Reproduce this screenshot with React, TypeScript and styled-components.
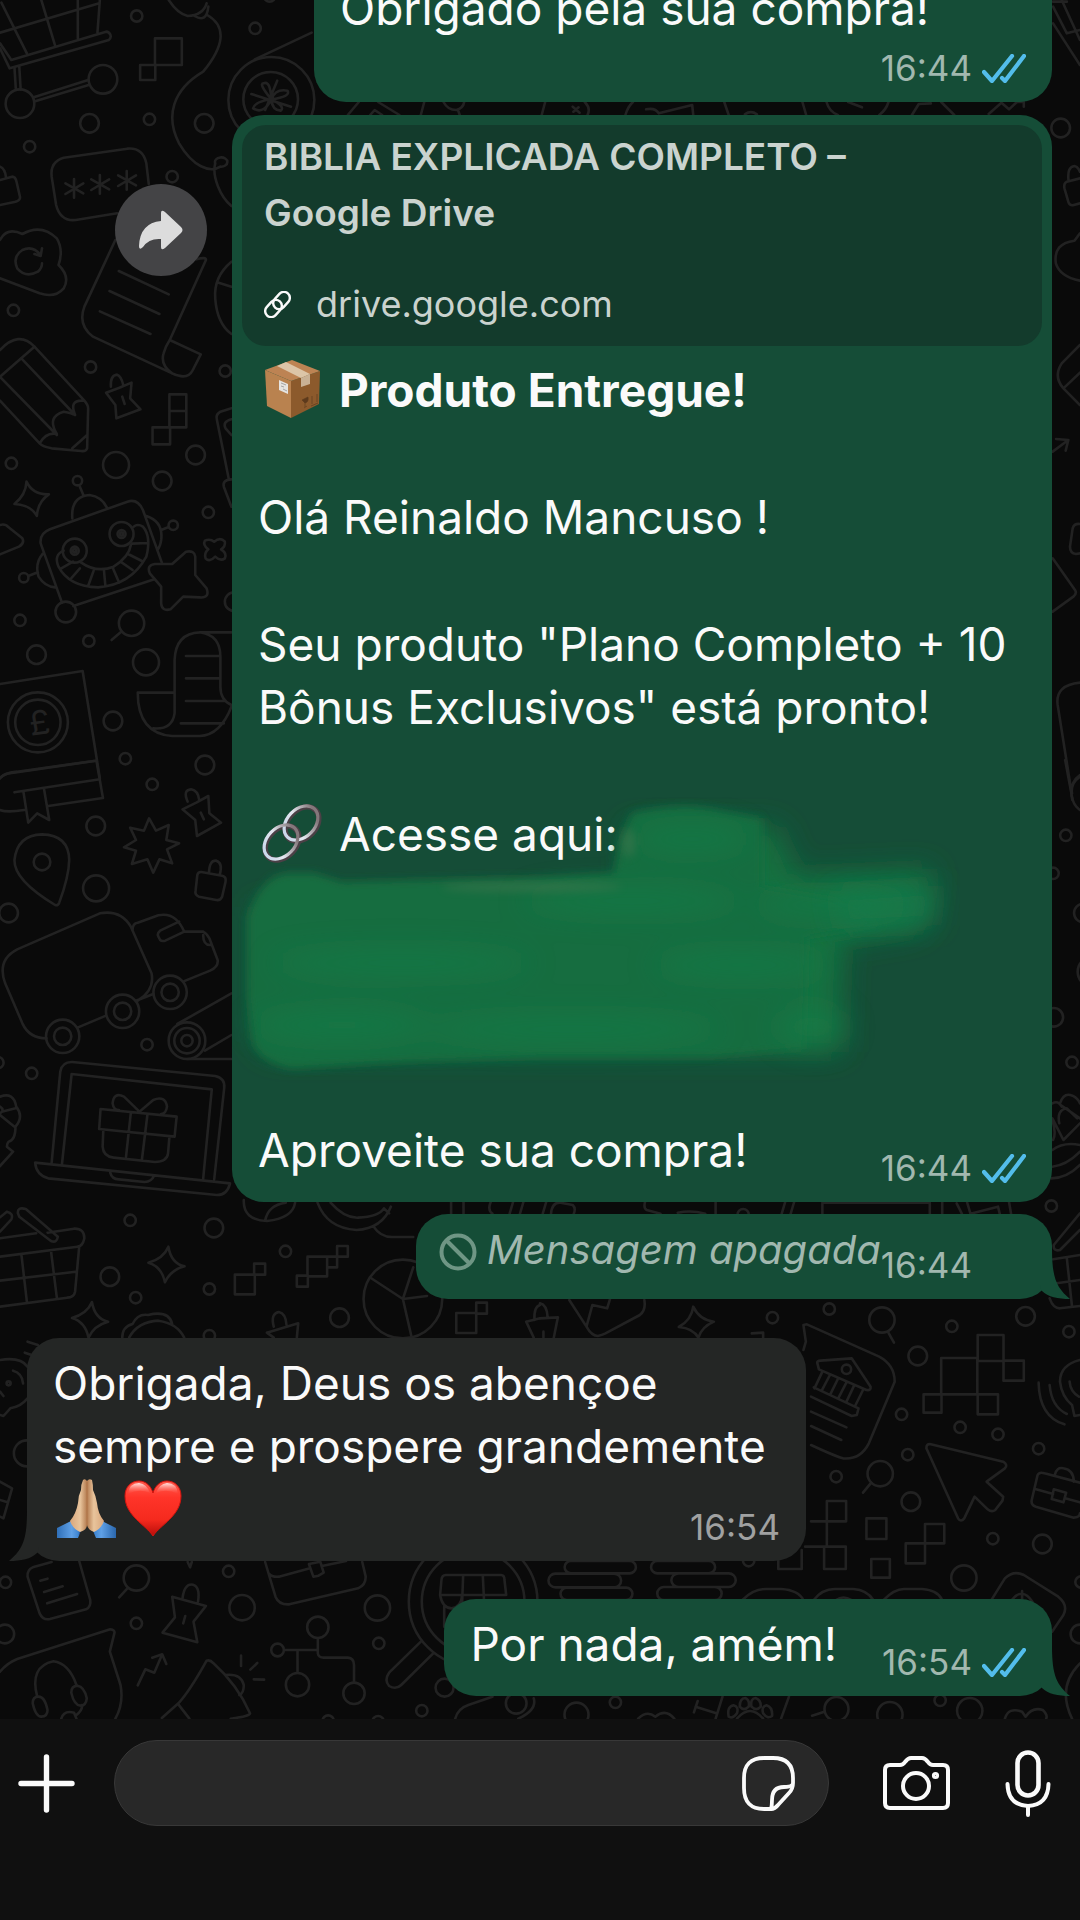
import React from 'react'
import styled, { createGlobalStyle } from 'styled-components'

const colors = {
  wall: '#0a0a0a',
  doodle: '#222222',
  sent: '#154d37',
  preview: '#133b2c',
  received: '#242625',
  text: '#fafafa',
  previewText: '#cad3cf',
  sentMeta: '#a1b8af',
  receivedMeta: '#a0a1a1',
  tick: '#53bdeb',
  bar: '#101010',
  field: '#282828',
  fieldBorder: '#383838',
}

type Circle = [number, number, number]

/* The wallpaper drawings sit on patches, each with its own origin */
const xUnit = 2.904
const yUnit = 3

type PatchProps = {
  x: number
  y: number
  unit?: number
  d: string[]
  circles?: Circle[]
  children?: React.ReactNode
}

function Patch({ x, y, unit = xUnit, d, circles = [], children }: PatchProps) {
  return (
    <g transform={`translate(${x} ${y}) scale(${1 / unit} ${1 / yUnit})`}>
      {d.map((path) => (
        <path key={path} d={path} />
      ))}
      {circles.map(([cx, cy, r]) => (
        <ellipse key={`${cx}-${cy}-${r}`} cx={cx} cy={cy} rx={(r * unit) / yUnit} ry={r} />
      ))}
      {children}
    </g>
  )
}

function Doodles() {
  return (
    <Wallpaper viewBox="0 0 1080 1719" preserveAspectRatio="xMidYMin slice" aria-hidden="true">
      <Patch
        x={0}
        y={0}
        d={[
          'M0 130L33 180L308 95A14 14 0 0 1 316 120L28 205L0 145M4 8L78 160M120 0L160 137M226 0V115M290 0L283 98M0 98L288 10',
          'M42 203L46 268M56 200L60 268M98 292L256 240M102 304L260 254',
          'M450 115H528V195H450ZM407 195H451V240H407Z',
          'M490 0Q515 40 545 48Q590 45 600 10M565 48Q600 70 605 20M602 45C660 80 650 140 590 215C500 270 480 350 520 430C560 500 610 520 640 500A18 14 0 1 0 625 490C615 530 640 590 672 618',
          'M740 178L905 98',
          'M788 298Q750 250 765 250Q785 240 788 298M788 298Q800 265 835 272Q845 290 788 298M788 298Q740 305 735 325Q765 345 788 298M788 298Q790 330 815 332Q830 320 788 298M730 282L845 320M805 242L770 330',
          'M432 552L425 490Q415 442 370 446L185 473Q145 485 150 530L163 615Q175 665 220 660L340 640',
          'M215 537V593M190 550L242 580M190 582L242 550M290 525V581M265 538L317 568M265 570L317 538M368 513V569M343 526L395 556M343 558L395 526',
          'M0 500Q15 505 18 535M0 540L35 530Q45 530 48 545L58 590Q60 600 45 605L0 615',
          'M0 720Q20 680 65 702Q120 670 165 715Q185 750 170 795Q205 830 185 865Q160 895 115 880L0 835M122 745L118 768L100 762M118 765Q95 735 65 750Q35 770 50 805Q75 835 110 815Q122 805 122 790',
          'M335 720L245 920Q225 975 270 1010L500 1120Q545 1142 560 1110L583 1063L493 1020M500 1120Q465 1095 475 1060Q480 1040 493 1020L598 780Q600 770 570 778M345 813L490 883M318 873L463 942M290 934L437 1002',
          'M672 785Q620 830 625 895Q630 970 672 1002M635 848L672 860',
          'M0 1050Q55 990 100 1040L0 1130',
          'M1010 345L1042 306M1098 306L1160 345M1075 345L1088 330L1110 345M1232 306L1222 345M1288 306Q1300 330 1325 330Q1345 325 1348 306M1330 330L1335 345',
        ]}
        circles={[
          [58, 311, 43], [299, 238, 43], [397, 48, 17], [741, 85, 17], [260, 370, 28], [434, 358, 17],
          [86, 440, 17], [593, 370, 28], [500, 530, 17], [39, 931, 17], [263, 1101, 17], [654, 1113, 17],
          [783, -12, 17], [788, 300, 129], [786, 298, 82],
        ]}
      />
      <Patch
        x={540}
        y={0}
        d={[
          'M1490 70L1568 195M1490 20L1530 100L1568 90M1515 0L1568 120M1490 5H1530',
          'M15 306L5 345M95 320L115 338M97 335L112 322M130 306Q148 325 138 345M248 345Q255 320 270 306M308 328Q335 322 345 340L442 315L445 345M535 306L548 345M595 343Q612 330 630 343M762 306L773 345M832 306Q840 335 865 345M1012 306Q1005 330 985 345M895 306L935 322M1080 345L1100 312L1135 310M1165 306L1203 345M1303 342L1340 308L1362 328L1385 306L1405 306V320',
          'M1568 535L1530 545Q1520 550 1523 565L1535 608Q1540 618 1550 615L1568 610M1535 543Q1530 500 1552 498Q1562 500 1568 515',
          'M1568 700L1552 722Q1490 730 1498 790Q1510 830 1568 842',
          'M1568 1035L1515 1090Q1490 1130 1520 1165L1568 1215M1520 1165L1568 1118',
        ]}
        circles={[[1512, 384, 28]]}
      />
      <Patch
        x={0}
        y={380}
        d={[
          'M100 -100L245 62Q256 75 256 85L253 205Q250 215 235 213L150 205Q125 200 115 190L0 62M62 -65L218 105M-10 -20L165 165M115 190Q135 155 165 162Q135 110 185 95Q210 100 218 105Q200 60 240 62M253 165L210 205',
          'M322 20Q320 -14 340 -16Q352 -12 358 15M308 38L345 24L382 8L378 55L408 88L338 115L335 75ZM355 50L362 72',
          'M492 43H541V142H492ZM492 93H541M443 142H494V193H443Z',
          'M352 755L324 780',
          'M77 305Q95 345 142 343Q110 365 107 408Q90 375 42 372Q75 345 77 305Z',
          'M180 668L118 490Q115 460 145 448L370 365Q400 355 415 390L470 548M213 678L448 598M210 415Q205 350 260 345Q295 350 310 382M232 320L242 345M425 408Q475 425 468 480Q465 500 458 508M468 450L490 441M125 520Q100 550 112 590Q130 620 160 622M82 588L110 577',
          'M185 512Q155 525 170 560Q200 620 285 622Q380 615 425 530Q440 470 415 440Q400 430 388 440M235 547Q280 580 330 560Q375 530 380 495M205 597L232 565M257 615L272 572M306 618L302 572M346 608L328 565M385 570L350 545M412 543L372 522M430 489L383 491M178 565L212 545',
          'M500 552L540 515Q565 510 567 530V585L600 625Q610 655 580 652L532 650L495 688Q470 695 468 670V620L435 580Q425 555 450 552Z',
          'M622 485Q640 470 653 485Q655 500 642 508Q660 520 653 535Q640 545 625 530Q608 548 597 535Q592 520 605 508Q588 495 595 482Q610 475 622 485Z',
          'M0 435Q15 430 25 442L65 475Q72 490 55 500L0 523',
          'M672 85L640 95Q625 105 630 120L665 300M672 118Q645 125 655 145L672 165M672 298Q645 300 650 320L672 380',
          'M672 757H580Q510 760 507 840V1000Q500 1050 445 1045M507 938H400Q400 1060 500 1068H580Q640 1065 672 980M580 757Q640 765 640 830V920Q640 960 672 975M540 828H635M540 895H635M540 963H655M525 1030H650',
          'M0 912L240 873L290 1195M277 1142L50 1175Q0 1180 -10 1210',
        ]}
        circles={[
          [33, 250, 17], [337, 255, 39], [568, 225, 28], [471, 303, 28], [605, 397, 17], [58, 721, 17],
          [382, 730, 38], [258, 783, 17], [106, 824, 28], [424, 847, 39], [328, 1023, 28], [364, 1136, 17],
          [595, 1155, 28], [191, 696, 31], [225, 302, 14], [503, 436, 14], [69, 593, 14], [680, 665, 28],
          [353, 462, 36], [217, 512, 36], [353, 462, 12], [353, 462, 5], [217, 512, 12], [217, 512, 5],
          [110, 1027, 90], [110, 1027, 68],
        ]}
      >
        <Pound x={84} y={1064} transform="rotate(-8 110 1027)">
          £
        </Pound>
      </Patch>
      <Patch
        x={1000}
        y={380}
        unit={3}
        d={[
          'M158 215L205 180M168 177L205 180L197 212M240 432Q222 430 218 445L210 500Q210 520 228 522L240 520M158 535L225 630Q232 640 220 650L158 695M240 908Q165 915 173 975L215 1240M240 1185Q205 1210 217 1260',
        ]}
      />
      <Patch
        x={0}
        y={760}
        d={[
          'M0 55Q10 40 40 38L280 2L299 114L140 138M0 150Q20 158 70 150M42 97L290 58M68 95L82 188L108 160L143 180L128 88',
          'M433 175L453 212L490 195L483 240L520 250L485 268L500 310L463 298L445 338L428 298L383 312L395 272L360 262L395 240L378 203L418 212Z',
          'M545 125Q530 90 555 88Q575 92 578 118M530 148L570 128L605 108L608 160L642 188L572 228L567 180ZM583 158L592 178',
          'M160 435Q40 360 42 300Q50 225 122 223Q200 225 201 300Q200 350 172 428Q168 438 160 435Z',
          'M585 336L645 347Q658 350 655 365L645 410Q640 422 628 420L578 410Q565 405 568 392L573 345Q575 335 585 336M607 338Q608 300 628 302Q648 308 638 345',
          'M135 835Q85 835 65 790L15 670Q-10 600 50 568L290 460Q350 448 380 500L440 640Q450 690 400 722M225 803L308 767M385 510Q385 490 400 488L460 466Q510 455 535 515H590Q600 520 608 535L632 600Q635 620 610 632L533 664M395 722L445 702M520 485L465 512Q455 520 460 530L465 540Q470 545 480 542L535 515M590 525Q590 555 610 555',
          'M515 792L672 700M595 872L672 825M543 897H672',
          'M0 1010Q40 995 47 1040Q70 1070 45 1100Q45 1140 25 1145Q20 1150 20 1160L38 1175L0 1218M0 1040Q15 1050 0 1060M0 1065L42 1100M5 1055L45 1045',
          'M150 1208L175 935Q180 905 210 906L625 948Q655 955 651 985L622 1258M180 1212L208 942L615 988L590 1256M102 1208L668 1270Q660 1305 630 1305L140 1255Q105 1245 102 1208ZM320 1238Q325 1258 345 1258L420 1266Q440 1265 447 1248',
          'M292 1047L513 1070L507 1130L288 1107ZM300 1110L298 1160Q300 1190 330 1193L450 1206Q485 1205 488 1180L492 1130M380 1058L366 1190M428 1065L412 1200M405 1055L360 1010Q330 995 327 1030Q330 1050 345 1050M405 1055L445 1020Q480 1005 485 1040Q482 1062 468 1062',
        ]}
        circles={[
          [442, 73, 17], [278, 198, 28], [279, 385, 39], [25, 459, 28], [122, 306, 25], [427, 854, 17],
          [92, 940, 17], [-6, 908, 17], [182, 829, 50], [182, 829, 26], [356, 754, 50], [356, 754, 26],
          [494, 697, 50], [494, 697, 26], [543, 842, 55], [543, 842, 38], [543, 842, 17],
        ]}
      />
      <Patch
        x={540}
        y={760}
        d={[
          'M1525 0L1545 110Q1548 135 1568 150M1568 50Q1540 70 1545 100',
          'M1488 1030Q1505 1020 1515 1040M1510 1030Q1520 1000 1540 1005Q1560 1010 1568 1030M1508 1090Q1500 1050 1530 1045L1560 1075M1488 1075L1520 1140L1568 1090M1512 1035L1568 1075M1488 1080Q1500 1120 1490 1140M1488 1170Q1520 1145 1568 1155M1488 1220Q1530 1215 1568 1175M1485 1255Q1530 1255 1568 1215',
        ]}
        circles={[
          [1527, 226, 17], [1490, 340, 17], [1578, 459, 28], [1605, 635, 45], [1492, 772, 28], [1545, 907, 17],
        ]}
      />
      <Patch
        x={0}
        y={1180}
        d={[
          'M708 60Q705 120 775 123Q850 115 857 68M770 122Q778 75 830 68M922 68Q950 145 1035 150Q1110 145 1135 80M960 68Q1000 115 1040 113Q1100 110 1115 85L1130 100M1085 140Q1105 172 1140 171H1200M1310 66V101M1346 66V101M1425 66Q1415 90 1430 101M1490 66L1480 101M1520 66L1510 101',
          'M0 175L105 160M138 158L215 146Q245 145 245 175Q240 200 225 200L0 230M230 200L218 335Q215 352 195 353L0 380M62 222L78 365M148 212L165 353M0 302L220 275M0 155L33 118Q40 100 20 95L0 112M56 110L148 183Q165 190 168 170L75 87Q50 80 52 100Z',
          'M489 200Q497 250 536 259Q495 270 479 307Q470 260 431 248Q475 235 489 200Z',
          'M267 366Q275 416 314 425Q273 436 257 473Q248 426 209 414Q253 401 267 366Z',
          'M682 284H740V343H682ZM738 251H770V284H738ZM893 230H950V289H893ZM862 287H894V320H862ZM950 230H979V262H950ZM979 198H1010V230H979ZM1325 399H1383V459H1325ZM1383 368H1414V401H1383Z',
          'M1170 357L1077 294M1170 357L1200 262M1170 357L1240 348M1170 357L1195 470',
          'M355 473Q355 440 385 432Q400 400 430 405Q490 390 500 432M375 473Q400 425 460 422Q515 430 535 473',
          'M795 440Q785 400 810 396Q830 400 832 435M775 458L866 430L862 473M775 458L795 473',
          'M1528 425L1568 415M1528 425L1550 473M1568 375Q1550 380 1552 420',
          'M0 540Q60 530 80 560M80 655Q60 680 30 685L10 708L0 705M38 572Q65 580 67 610M80 485L110 495M72 518L92 525M0 635L10 648',
          'M0 905L35 925L10 1015L0 1010M0 960L22 967',
        ]}
        circles={[
          [378, 121, 17], [621, 144, 28], [319, 290, 28], [394, 353, 17], [829, 214, 17], [608, 327, 17],
          [986, 413, 28], [608, 467, 17], [1170, 357, 118], [78, 820, 39], [25, 610, 6], [25, 610, 2],
        ]}
      />
      <Patch
        x={540}
        y={1180}
        d={[
          'M18 66L8 101M32 101Q35 66 60 68L95 75Q105 85 98 101M305 66Q300 85 310 90L350 101M400 98Q440 90 480 101M510 66V101M712 66L702 101M738 66L728 101M820 101V68H1132V101M1168 66V101M1210 70L1225 101M1240 66L1250 101L1330 80L1335 101M1362 66L1368 101',
          'M1010 455L1028 488M962 908L938 938',
          'M1568 100L1492 195Q1490 215 1510 210L1568 150M1490 238L1568 225M1530 235L1545 380M1500 310L1568 300M1480 355Q1490 385 1510 385L1568 378',
          'M445 380Q463 420 505 425Q470 440 460 473Q445 445 403 441Q440 420 445 380Z',
          'M615 460L648 458V473M85 360L135 440Q150 468 168 468Q180 465 190 460L290 405Q308 390 303 360M135 440L152 375L195 385L203 358M0 370Q20 375 22 410M0 415L52 412L40 473M10 455V473',
          'M765 510L772 485L765 435L775 433L985 530Q1030 555 1030 605L955 790Q930 840 880 835Q860 830 787 795M787 650L905 708L920 705L925 685L795 622M805 548Q805 543 815 542L905 535L960 620Q962 632 948 630L810 568ZM820 575L797 625M842 585L818 632M865 597L843 643M890 607L866 655M912 617L890 665M938 630L915 678M787 695L890 742M787 738L875 780',
          'M1165 534H1270V643H1165ZM1271 465H1346V543H1271ZM1346 542H1405V602H1346ZM1114 643H1166V698H1114ZM1271 643H1330V703H1271ZM787 1024H833V1100H770M833 963H889V1024H833ZM825 1100H888V1167H825ZM692 1142V1167H760V1110M948 1015H1006V1077H948ZM1062 1090H1118V1150H1062ZM1118 1032H1174V1090H1118ZM962 1137H1016V1193H962Z',
          'M1135 793L1345 845Q1360 855 1350 865L1297 905L1345 950L1343 962L1322 990Q1312 998 1300 988L1262 950L1232 1015Q1222 1028 1214 1015L1122 805Q1122 790 1135 793Z',
          'M1448 608Q1450 710 1523 733M1480 615Q1485 680 1530 702M1568 540Q1510 555 1510 605Q1515 650 1545 675L1552 708L1568 705M1538 605Q1540 635 1565 650',
          'M1568 908L1465 880Q1450 875 1445 885L1428 960Q1425 975 1440 980L1550 1013Q1568 1012 1568 1000M1438 927L1490 942M1525 955L1568 967M1492 928L1528 938L1520 967L1486 957ZM1495 885Q1500 860 1520 865Q1550 870 1550 905',
        ]}
        circles={[
          [590, 104, 17], [1485, 78, 17], [675, 413, 17], [840, 387, 17], [993, 420, 38], [1196, 439, 17],
          [1410, 409, 28], [1536, 455, 17], [1097, 528, 28], [1050, 703, 17], [1220, 742, 17], [1330, 763, 17],
          [1448, 806, 17], [1068, 824, 17], [860, 890, 17], [988, 881, 38], [1077, 965, 28], [1315, 1076, 17],
          [1459, 1092, 28], [890, 568, 14],
        ]}
      />
      <Patch
        x={0}
        y={1540}
        d={[
          'M230 63L262 180Q265 200 250 208L145 237Q125 242 115 220L80 110Q78 90 95 82L150 66M117 122L138 116M128 156L182 139M137 190L224 162',
          'M370 145L346 172M545 66L552 82L557 66',
          'M530 175Q535 130 560 134Q582 140 575 185M500 170L598 198L562 245L573 307L472 278L508 232ZM538 228L532 250',
          'M923 294V340Q925 353 940 353H1010Q1028 355 1028 375V428M826 330H923M864 330V398',
          'M770 66L800 170Q810 195 840 193L1040 145Q1062 135 1062 110L1052 66M780 100Q790 112 810 110L900 85M935 78L1005 63M897 72L930 65L940 98L925 107L910 110Z',
          'M1222 305L1130 398Q1115 420 1130 438Q1150 450 1165 435L1258 340',
          'M1295 105H1455Q1465 105 1465 120L1470 165H1278L1282 120Q1283 105 1295 105M1345 105L1342 190M1402 105L1406 190M1278 165Q1285 205 1312 205Q1340 200 1342 165M1290 200V260',
          'M400 436L422 388L448 398L471 343M442 353L471 343L483 372',
          'M470 534L518 490Q550 455 600 362Q610 358 620 370Q690 435 726 520Q728 528 670 536M518 493L550 536M655 405Q700 400 708 435Q708 460 695 465M700 347V378M747 369L727 389M737 418L767 419',
          'M0 395Q20 370 50 357L320 268Q335 270 332 280L319 335L350 435Q360 490 335 536M108 470Q85 380 155 364Q200 370 222 435M238 495Q240 510 222 525M178 536Q185 510 215 518L222 536',
          'M95 490Q95 470 112 470Q130 470 138 510Q138 530 120 530Q103 530 95 490ZM207 458Q207 438 225 437Q245 440 252 475Q250 497 234 497Q215 495 207 458Z',
          'M1322 536Q1330 505 1360 495L1430 470M1550 475Q1560 510 1505 536',
        ]}
        circles={[
          [16, 127, 17], [396, 114, 38], [664, 94, 17], [703, 203, 38], [1096, 204, 38], [396, 250, 17],
          [14, 282, 28], [1100, 310, 17], [923, 262, 32], [806, 330, 19], [864, 434, 35], [1028, 460, 32],
          [1291, 443, 27], [1225, 512, 17], [953, 543, 17], [1098, 545, 17], [1499, 490, 31],
          [1374, 185, 193], [1374, 185, 154],
        ]}
      />
      <Patch
        x={540}
        y={1540}
        d={[
          'M90 63H260A18 18 0 0 1 260 100H90A18 18 0 0 1 90 63ZM45 101H215A20 20 0 0 1 215 142H45A20 20 0 0 1 45 101ZM78 143H250A18 18 0 0 1 250 180H78A18 18 0 0 1 78 143Z',
          'M341 63H490A18 18 0 0 1 490 100H341A18 18 0 0 1 341 63ZM402 100H548A20 20 0 0 1 548 141H402A20 20 0 0 1 402 100ZM360 141H508A18 18 0 0 1 508 180H360A18 18 0 0 1 360 141Z',
          'M588 180Q620 145 660 147H700Q750 150 765 180M795 180Q820 145 860 147H910Q950 150 968 180M998 180Q1030 145 1060 147H1110Q1155 150 1168 180M860 180Q880 165 905 180',
          'M1312 178L1350 115Q1375 90 1405 105L1505 170Q1535 195 1520 225L1487 275M1370 180Q1400 140 1430 185M1400 153V180',
          'M1568 370Q1500 440 1545 536',
          'M530 470L510 536M723 470L700 536M458 483L447 517M452 500L512 520M790 527L826 515M285 536Q310 510 335 530Q365 505 390 536M1350 536Q1360 500 1400 515L1410 530Q1430 500 1460 510Q1475 525 1470 536',
          'M572 536Q610 490 648 536M548 530Q542 500 562 496Q578 500 572 520Q560 538 548 530ZM580 500Q580 475 596 474Q610 480 606 500Q592 515 580 500ZM614 500Q610 476 626 474Q642 480 641 500Q628 515 614 500ZM648 520Q642 500 658 496Q676 502 674 528Q660 538 648 520Z',
        ]}
        circles={[
          [606, 62, 17], [1231, 114, 38], [106, 524, 36], [219, 487, 17], [861, 507, 36], [1016, 524, 38],
          [1162, 481, 17], [1248, 512, 38], [1571, 126, 17], [1568, 282, 28],
        ]}
      />
    </Wallpaper>
  )
}

function Package() {
  return (
    <Emoji viewBox="0 0 62 60" role="img" aria-label="📦">
      <path d="M4 11L30 22V59L6 47Z" fill="#b9824f" />
      <path d="M30 22L59 12L58 45L30 59Z" fill="#8c5a2c" />
      <path d="M4 11L31 1L59 12L30 22Z" fill="#bd8353" />
      <path d="M16 7L25 3L49 15L40 19Z" fill="#dcc5a8" />
      <path d="M40 19L49 15V25L40 28Z" fill="#c9b195" />
      <path d="M18 21L27 25V35L18 31Z" fill="#e6e4e1" />
      <path d="M20 24L25 26M20 27L23 28M22 30L26 32" stroke="#a5a5a5" strokeWidth="1" />
      <path d="M41 41L47 38Q48 43 44 44ZM44 43V48M43 49L46 47" stroke="#5d3a1c" fill="#5d3a1c" strokeWidth="0.6" />
      <path d="M51 37V45M56 35V43M50 47L57 44" stroke="#6a4422" strokeWidth="1" />
    </Emoji>
  )
}

function Chain() {
  return (
    <Emoji viewBox="0 0 62 60" role="img" aria-label="🔗" fill="none">
      <defs>
        <linearGradient id="steel" x1="0" y1="0" x2="1" y2="0.3">
          <stop offset="0" stopColor="#c3d3ea" />
          <stop offset="0.5" stopColor="#e4e8f0" />
          <stop offset="1" stopColor="#84777b" />
        </linearGradient>
      </defs>
      <g strokeWidth="5.4" stroke="#4b4046">
        <ellipse cx="41" cy="21" rx="19.5" ry="14" transform="rotate(-46 41 21)" />
        <ellipse cx="21" cy="40" rx="19.5" ry="14" transform="rotate(-46 21 40)" />
      </g>
      <g strokeWidth="3.2" stroke="url(#steel)">
        <ellipse cx="40" cy="20" rx="19.500" ry="14" transform="rotate(-46 40 20)" />
        <ellipse cx="20" cy="39" rx="19.500" ry="14" transform="rotate(-46 20 39)" />
      </g>
    </Emoji>
  )
}

function Hands() {
  return (
    <Emoji viewBox="0 0 62 60" role="img" aria-label="🙏🏼">
      <defs>
        <linearGradient id="skin" x1="0" x2="1" y1="0" y2="0">
          <stop offset="0" stopColor="#d9a67b" />
          <stop offset="0.3" stopColor="#e8c49c" />
          <stop offset="0.5" stopColor="#b57c50" />
          <stop offset="0.7" stopColor="#e8c49c" />
          <stop offset="1" stopColor="#d9a67b" />
        </linearGradient>
        <linearGradient id="sleeve" x1="0" x2="1" y1="0" y2="0">
          <stop offset="0" stopColor="#2f6fb8" />
          <stop offset="0.25" stopColor="#5fa0e6" />
          <stop offset="0.36" stopColor="#3f86d3" />
          <stop offset="0.42" stopColor="#04164a" />
          <stop offset="0.58" stopColor="#04164a" />
          <stop offset="0.64" stopColor="#3f86d3" />
          <stop offset="0.75" stopColor="#5fa0e6" />
          <stop offset="1" stopColor="#2a66ac" />
        </linearGradient>
      </defs>
      <path d="M1 50L15 43L25 53L22 60H1ZM60 50L46 43L37 53L40 60H60Z" fill="url(#sleeve)" />
      <path
        d="M31 3Q29 0 27 2Q25 6 25 12Q22 18 22 25Q20 36 14 43Q17 51 24 54Q31 52 31 47Q32 52 38 54Q45 51 48 43Q42 36 41 25Q40 18 37 12Q37 6 36 2Q33 0 31 3Z"
        fill="url(#skin)"
      />
      <path d="M31 4V47" stroke="#b07448" strokeWidth="1" />
    </Emoji>
  )
}

function Heart() {
  return (
    <Emoji viewBox="0 0 62 60" role="img" aria-label="❤️">
      <defs>
        <linearGradient id="red" x1="0" x2="0" y1="0" y2="1">
          <stop offset="0" stopColor="#ff5a4c" />
          <stop offset="0.3" stopColor="#ff3429" />
          <stop offset="0.7" stopColor="#f52a1e" />
          <stop offset="1" stopColor="#b80d0a" />
        </linearGradient>
        <linearGradient id="gloss" x1="0" x2="0" y1="0" y2="1">
          <stop offset="0" stopColor="#ffffff" stopOpacity="0.85" />
          <stop offset="1" stopColor="#ff6a5e" stopOpacity="0" />
        </linearGradient>
      </defs>
      <path
        d="M29 58C22 47 1 38 1 18C1 9 7 3 15 3C22 3 27 8 29 15C31 8 36 3 43 3C51 3 57 9 57 18C57 38 36 47 29 58Z"
        fill="url(#red)"
        stroke="#d3140e"
        strokeWidth="1"
      />
      <path d="M4 16Q5 5 15 5Q23 6 26 15Q15 10 4 16ZM54 16Q53 5 43 5Q35 6 32 15Q43 10 54 16Z" fill="url(#gloss)" />
    </Emoji>
  )
}

/* Brush strokes that hide the delivery link */
function Smear() {
  return (
    <SmearLayer viewBox="0 0 760 300" aria-hidden="true">
      <defs>
        <filter id="edge" x="-10%" y="-20%" width="120%" height="140%">
          <feGaussianBlur stdDeviation="4" />
        </filter>
        <filter id="soft" x="-20%" y="-40%" width="140%" height="180%">
          <feGaussianBlur stdDeviation="14" />
        </filter>
      </defs>
      <g filter="url(#soft)" fill="#19703f">
        <path d="M395 30H545L565 78L700 72L690 132L612 145L608 255H40L24 240V110L400 105Z" />
      </g>
      <g filter="url(#edge)" fill="#196d40">
        <path d="M388 45L400 16Q450 4 490 14L530 22L530 90L600 102L650 128L575 140L572 252L480 260H310L150 266L60 272Q30 266 22 248L16 200V120Q24 92 42 80L54 76L82 76L110 85L310 80L382 76Z" />
      </g>
      <g filter="url(#soft)">
        <path d="M600 95L706 88L700 128L610 132Z" fill="#18764a" />
      </g>
      <g filter="url(#soft)" fill="#188048" opacity="0.55">
        <ellipse cx="460" cy="42" rx="60" ry="14" />
        <ellipse cx="400" cy="104" rx="110" ry="14" />
        <ellipse cx="600" cy="108" rx="80" ry="14" />
        <ellipse cx="170" cy="166" rx="130" ry="14" />
        <ellipse cx="510" cy="168" rx="90" ry="15" />
        <ellipse cx="110" cy="228" rx="90" ry="16" />
        <ellipse cx="340" cy="232" rx="150" ry="14" />
        <ellipse cx="580" cy="230" rx="36" ry="20" />
      </g>
      <g filter="url(#edge)" fill="#5a7a55" opacity="0.35">
        <ellipse cx="397" cy="46" rx="7" ry="14" />
        <ellipse cx="300" cy="90" rx="90" ry="5" />
      </g>
    </SmearLayer>
  )
}

function Tail({ side }: { side: 'left' | 'right' }) {
  return (
    <TailShape $side={side} viewBox="0 0 30 50" aria-hidden="true">
      <path d="M0 0H12C12 30 17 39 30 50C18 50 8 48 2 42Q0 40 0 36Z" />
    </TailShape>
  )
}

function Stamp({ time, read = false }: { time: string; read?: boolean }) {
  return (
    <Meta>
      <time>{time}</time>
      {read && (
        <svg width="44" height="29" viewBox="0 0 44 29" role="img" aria-label="Lida">
          <path
            d="M2 18L10 27L30 2M20 24L23 27L42 2"
            fill="none"
            stroke={colors.tick}
            strokeWidth="4.2"
            strokeLinecap="round"
            strokeLinejoin="round"
          />
        </svg>
      )}
    </Meta>
  )
}

export default function App() {
  return (
    <Page>
      <GlobalStyle />
      <Chat>
        <Doodles />
        <Row>
          <Bubble $width="72%">
            <Text>Obrigado pela sua compra!</Text>
            <Footer $space={8}>
              <Stamp time="16:44" read />
            </Footer>
          </Bubble>
        </Row>
        <Row $space={13}>
          <Forward type="button" aria-label="Encaminhar">
            <svg width="44" height="40" viewBox="0 0 44 40" fill="#dcdcdc" aria-hidden="true">
              <path d="M22 3Q22 -1 26 2L42 17Q45 20 42 23L26 38Q22 41 22 37V29Q10 28 4 37Q0 41 0 36Q1 13 22 11Z" />
            </svg>
          </Forward>
          <Bubble $width="80%" $flush>
            <Preview href="https://drive.google.com">
              <PreviewTitle>
                BIBLIA EXPLICADA COMPLETO –<br />
                Google Drive
              </PreviewTitle>
              <PreviewLink>
                <svg width="27" height="27" viewBox="0 0 27 27" fill="none" stroke="#fafafa" strokeWidth="2.4" aria-hidden="true">
                  <rect x="8" y="3.5" width="19" height="12" rx="6" transform="rotate(-48 17.5 9.5)" />
                  <rect x="0" y="11.5" width="19" height="12" rx="6" transform="rotate(-48 9.5 17.5)" />
                </svg>
                drive.google.com
              </PreviewLink>
            </Preview>
            <Body>
              <Text>
                <Package /> <strong>Produto Entregue!</strong>
              </Text>
              <Text>Olá Reinaldo Mancuso !</Text>
              <Text>Seu produto "Plano Completo + 10 Bônus Exclusivos" está pronto!</Text>
              <Hidden>
                <Chain /> Acesse aqui:
                <Smear />
              </Hidden>
              <Footer>
                <Text $last>Aproveite sua compra!</Text>
                <Stamp time="16:44" read />
              </Footer>
            </Body>
          </Bubble>
        </Row>
        <Row $space={12}>
          <Deleted>
            <svg width="38" height="38" viewBox="0 0 38 38" fill="none" stroke="#6f9685" strokeWidth="4" aria-hidden="true">
              <circle cx="19" cy="19" r="16.5" />
              <path d="M7 7L31 31" />
            </svg>
            <em>Mensagem apagada</em>
            <Stamp time="16:44" />
            <Tail side="right" />
          </Deleted>
        </Row>
        <Row $space={39} $received>
          <Bubble $width="76%" $received>
            <Text>
              Obrigada, Deus os abençoe
              <br />
              sempre e prospere grandemente
            </Text>
            <Footer>
              <Text $last>
                <Hands />
                <Heart />
              </Text>
              <Stamp time="16:54" />
            </Footer>
            <Tail side="left" />
          </Bubble>
        </Row>
        <Row $space={38}>
          <Bubble>
            <Footer>
              <Text $last>Por nada, amém!</Text>
              <Stamp time="16:54" read />
            </Footer>
            <Tail side="right" />
          </Bubble>
        </Row>
      </Chat>
      <Composer>
        <IconButton type="button" aria-label="Anexar">
          <svg width="57" height="59" viewBox="0 0 57 59" strokeWidth="5.4">
            <path d="M28.5 3V56M3 29.5H54" />
          </svg>
        </IconButton>
        <Field>
          <Input type="text" aria-label="Mensagem" />
          <IconButton type="button" aria-label="Figurinhas">
            <svg width="53" height="55" viewBox="0 0 53 55" strokeWidth="3.8">
              <path d="M29 53H22Q2 53 2 32V22Q2 2 22 2H31Q51 2 51 22V27Q51 33 47 37L36 49Q33 53 29 53Z" />
              <path d="M29 53Q30 50 30 44Q30 31 42 31Q48 31 50 29" />
            </svg>
          </IconButton>
        </Field>
        <IconButton type="button" aria-label="Câmera">
          <svg width="67" height="54" viewBox="0 0 67 54" strokeWidth="4">
            <path d="M7 9H17Q20 9 22 6Q25 2 28 2H39Q42 2 45 6Q47 9 50 9H60Q65 9 65 14V47Q65 52 60 52H7Q2 52 2 47V14Q2 9 7 9Z" />
            <circle cx="33" cy="30" r="13" />
            <circle cx="52.5" cy="19.5" r="1.6" />
          </svg>
        </IconButton>
        <IconButton type="button" aria-label="Gravar áudio">
          <svg width="46" height="67" viewBox="0 0 46 67" strokeWidth="4">
            <rect x="12.5" y="2.5" width="21" height="43" rx="10.5" strokeWidth="4.6" />
            <path d="M2.5 34Q3 55 23 56Q43 55 43.5 34M23 56V65" />
          </svg>
        </IconButton>
      </Composer>
    </Page>
  )
}

const GlobalStyle = createGlobalStyle`
  * {
    box-sizing: border-box;
  }

  body {
    margin: 0;
    background: ${colors.bar};
    color: ${colors.text};
    font-family: Inter, 'Liberation Sans', sans-serif;
  }

  button {
    padding: 0;
    border: 0;
    background: none;
    color: inherit;
    cursor: pointer;
  }
`

const Page = styled.main`
  display: flex;
  flex-direction: column;
  height: 100vh;
`

const Chat = styled.section`
  position: relative;
  flex: 1;
  min-height: 0;
  display: flex;
  flex-direction: column;
  justify-content: flex-end;
  padding: 0 28px 23px 27px;
  overflow: hidden;
  background: ${colors.wall};
`

const Wallpaper = styled.svg`
  position: absolute;
  inset: 0;
  width: 100%;
  height: 100%;
  fill: none;
  stroke: ${colors.doodle};
  stroke-width: 2.6px;
  stroke-linecap: round;
  stroke-linejoin: round;

  path,
  ellipse {
    vector-effect: non-scaling-stroke;
  }
`

const Pound = styled.text`
  fill: ${colors.doodle};
  stroke: none;
  font-size: 100px;
`

const Row = styled.div<{ $space?: number; $received?: boolean }>`
  position: relative;
  display: flex;
  flex-shrink: 0;
  align-items: flex-start;
  justify-content: ${({ $received }) => ($received ? 'flex-start' : 'flex-end')};
  gap: 25px;
  margin-top: ${({ $space = 0 }) => $space}px;
`

const Bubble = styled.article<{ $width?: string; $flush?: boolean; $received?: boolean }>`
  --bubble: ${({ $received }) => ($received ? colors.received : colors.sent)};
  --meta: ${({ $received }) => ($received ? colors.receivedMeta : colors.sentMeta)};
  position: relative;
  width: ${({ $width = 'auto' }) => $width};
  padding: ${({ $flush }) => ($flush ? '10px 10px 14px' : '14px 26px')};
  border-radius: 32px;
  background: var(--bubble);
`

const Deleted = styled(Bubble)`
  display: flex;
  align-items: flex-end;
  padding: 10px 80px 14px 23px;
  font-size: 40px;
  line-height: 52px;
  color: ${colors.sentMeta};

  svg:first-child {
    margin: 0 10px 14px 0;
  }

  em {
    padding-bottom: 9px;
  }
`

const Text = styled.p<{ $last?: boolean }>`
  margin: 0;
  padding-bottom: ${({ $last }) => ($last ? 6 : 0)}px;
  font-size: 46px;
  line-height: 63px;

  strong {
    font-weight: 700;
  }
`

const Body = styled.div`
  display: flex;
  flex-direction: column;
  gap: 64px;
  padding: 13px 16px 0;
`

/* One visible line and three covered ones */
const Hidden = styled(Text)`
  position: relative;
  min-height: 252px;
`

const SmearLayer = styled.svg`
  position: absolute;
  top: -6px;
  left: -26px;
  width: 760px;
  height: 300px;
`

const Footer = styled.div<{ $space?: number }>`
  display: flex;
  align-items: flex-end;
  justify-content: flex-end;
  gap: 45px;
  margin-top: ${({ $space = 0 }) => $space}px;

  ${Text} {
    flex: 1;
    white-space: nowrap;
  }
`

const Meta = styled.div`
  display: flex;
  align-items: center;
  gap: 10px;
  font-size: 35px;
  line-height: 40px;
  color: var(--meta);
`

const TailShape = styled.svg<{ $side: 'left' | 'right' }>`
  position: absolute;
  bottom: 0;
  ${({ $side }) => $side}: -18px;
  width: 30px;
  height: 50px;
  fill: var(--bubble);
  transform: ${({ $side }) => ($side === 'left' ? 'scaleX(-1)' : 'none')};
`

const Forward = styled.button`
  display: grid;
  place-items: center;
  flex-shrink: 0;
  width: 92px;
  height: 92px;
  margin-top: 69px;
  border-radius: 50%;
  background: #444446;
`

const Preview = styled.a`
  display: block;
  padding: 4px 22px 20px;
  border-radius: 24px;
  background: ${colors.preview};
  color: ${colors.previewText};
  text-decoration: none;
`

const PreviewTitle = styled.h2`
  margin: 0 0 41px;
  font-size: 37px;
  line-height: 56px;
  font-weight: 600;
`

const PreviewLink = styled.div`
  display: flex;
  align-items: center;
  gap: 25px;
  font-size: 36px;
  line-height: 44px;
`

const Emoji = styled.svg`
  width: 62px;
  height: 60px;
  margin: 0 3px;
  vertical-align: -12px;
`

const Composer = styled.footer`
  display: flex;
  align-items: center;
  padding: 21px 29px 94px 18px;
  background: ${colors.bar};
`

const Field = styled.div`
  display: flex;
  align-items: center;
  flex: 1;
  min-width: 0;
  height: 86px;
  margin: 0 54px 0 39px;
  padding: 0 33px 0 36px;
  border: 1px solid ${colors.fieldBorder};
  border-radius: 43px;
  background: ${colors.field};
`

const Input = styled.input`
  flex: 1;
  min-width: 0;
  height: 100%;
  border: 0;
  outline: 0;
  background: none;
  color: inherit;
  font: inherit;
  font-size: 46px;
`

const IconButton = styled.button`
  display: flex;

  & + & {
    margin-left: 55px;
  }

  svg {
    fill: none;
    stroke: ${colors.text};
    stroke-linecap: round;
    stroke-linejoin: round;
  }
`
